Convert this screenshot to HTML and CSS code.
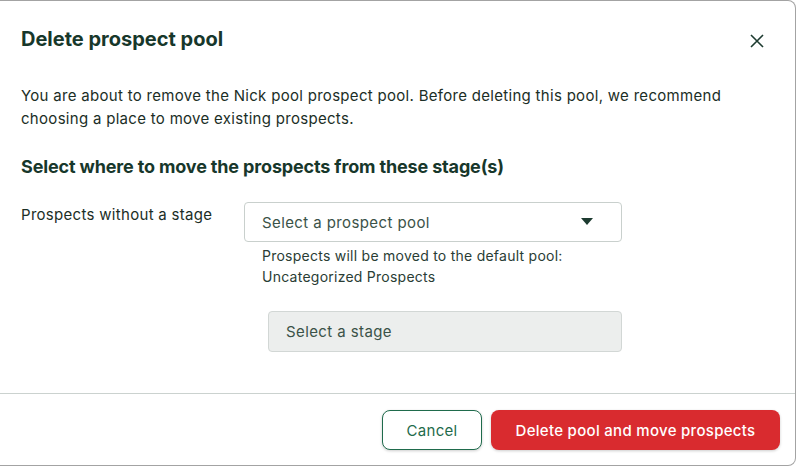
FILE: index.html
```
<!DOCTYPE html>
<html lang="en">
<head>
<meta charset="UTF-8">
<title>Delete prospect pool</title>
<link rel="stylesheet" href="styles.css">
</head>
<body>
<div class="modal">
  <div class="modal-head">
    <h2>Delete prospect pool</h2>
    <button class="close" title="Close">
      <svg width="14" height="14" viewBox="0 0 14 14"><path d="M1 1L13 13M13 1L1 13" stroke="#1d3b30" stroke-width="1.6" fill="none"/></svg>
    </button>
  </div>

  <div class="modal-body">
    <p class="intro">You are about to remove the Nick pool prospect pool. Before deleting this pool, we recommend choosing a place to move existing prospects.</p>
    <h3>Select where to move the prospects from these stage(s)</h3>

    <div class="row">
      <div class="label">Prospects without a stage</div>
      <div class="field">
        <div class="select">
          <span>Select a prospect pool</span>
          <svg width="12" height="8" viewBox="0 0 12 8"><path d="M0 0H12L6 7Z" fill="#1d3b30"/></svg>
        </div>
        <div class="help">Prospects will be moved to the default pool:<br>Uncategorized Prospects</div>
        <div class="select disabled"><span>Select a stage</span></div>
      </div>
    </div>
  </div>

  <div class="modal-foot">
    <button class="btn cancel">Cancel</button>
    <button class="btn danger">Delete pool and move prospects</button>
  </div>
</div>
</body>
</html>
```
FILE: styles.css
```
body{margin:0;background:#fff;font-family:'Inter','Liberation Sans',sans-serif;color:#1b2e26;}

.modal{
  width:796px;height:466px;box-sizing:border-box;
  border:1px solid #a3a3a3;border-left:none;
  border-radius:0 8px 8px 0;
  display:flex;flex-direction:column;
  background:#fff;
}
.modal-head{display:flex;justify-content:space-between;align-items:flex-start;padding:25px 28px 0 21px;}
.modal-head h2{margin:0;font-size:20px;line-height:26px;font-weight:700;color:#17372b;}
.close{border:none;background:none;padding:0;margin-top:5px;cursor:pointer;width:20px;height:20px;display:flex;align-items:center;justify-content:center;}

.modal-body{padding:0 21px;}
.intro{margin:32px 0 0;font-size:15px;line-height:23px;letter-spacing:0.3px;color:#1b2e26;}
h3{margin:25px 0 0;font-size:18px;line-height:24px;font-weight:700;letter-spacing:-0.15px;color:#17372b;}

.row{display:grid;grid-template-columns:223px 378px;margin-top:23px;}
.label{font-size:15px;line-height:22px;padding-top:2px;letter-spacing:0.3px;color:#1b2e26;}
.select{
  height:40px;box-sizing:border-box;
  border:1px solid #c9d0cd;border-radius:4px;
  display:flex;align-items:center;justify-content:space-between;
  padding:0 28px 0 17px;
  font-size:15px;letter-spacing:0.4px;color:#3b5248;
}
.help{font-size:14px;line-height:21px;color:#2a3d35;padding:3px 0 0 18px;letter-spacing:0.25px;}
.select.disabled{margin:24px 0 0 24px;height:41px;background:#eceeed;border-color:#d2d7d5;}

.modal-foot{
  margin-top:auto;border-top:1px solid #cbd2cf;
  display:flex;justify-content:flex-end;gap:9px;
  padding:16px 15px 15px 0;
}
.btn{height:40px;border-radius:8px;font-family:inherit;font-size:15px;letter-spacing:0.3px;cursor:pointer;box-shadow:0 1px 3px rgba(0,0,0,.2);}
.cancel{width:100px;background:#fff;border:1px solid #1f6b4c;color:#1f6b4c;}
.danger{width:289px;background:#d92b2f;border:none;color:#fff;font-weight:500;}
```
